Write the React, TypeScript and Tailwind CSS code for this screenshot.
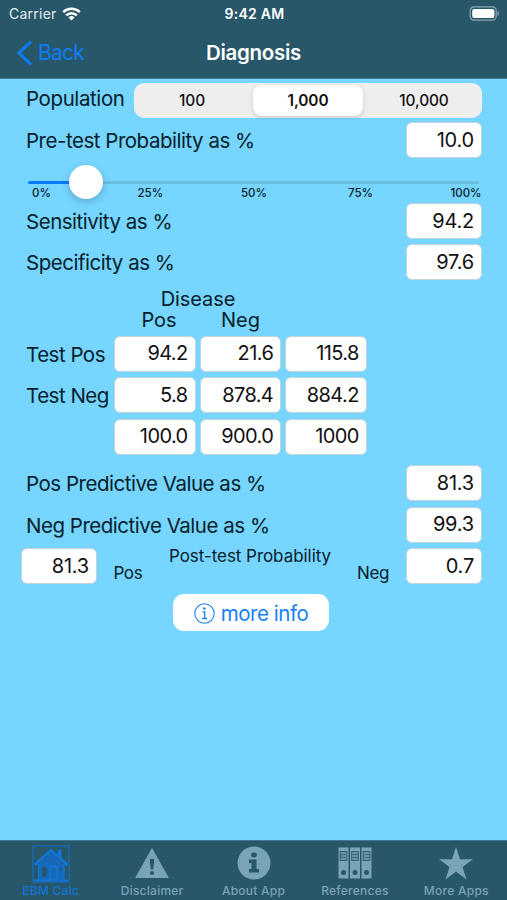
import { useState } from "react";

const populations = [
  { label: "100", className: "flex-1 pr-[5px] font-medium" },
  { label: "1,000", className: "w-[110px] font-medium" },
  { label: "10,000", className: "flex-1 pl-[5px] font-medium" },
];

const tableRows = [
  { label: "Test Pos", values: ["94.2", "21.6", "115.8"] },
  { label: "Test Neg", values: ["5.8", "878.4", "884.2"] },
  { label: "", values: ["100.0", "900.0", "1000"] },
];

function StatusBar() {
  return (
    <div className="grid h-7 grid-cols-3 items-center pr-[7px] pl-[9px] text-white">
      <div className="flex items-center gap-[5px]">
        <span className="text-[14px] leading-none tracking-[0.25px] text-[#e4edf1]">Carrier</span>
        <svg width="19" height="14" viewBox="0 0 19 14" fill="none" stroke="currentColor" strokeWidth="2.5">
          <path d="M1.2 5.1a12 12 0 0 1 16.6 0" />
          <path d="M4.2 8.4a7.6 7.6 0 0 1 10.6 0" />
          <path d="M9.5 13.6l-3-3.1a4.3 4.3 0 0 1 6 0z" fill="currentColor" stroke="none" />
        </svg>
      </div>
      <span className="text-center text-[14px] leading-none font-semibold tracking-[0.25px] whitespace-nowrap">9:42 AM</span>
      <svg className="mt-[-1px] justify-self-end" width="31" height="15" viewBox="0 0 31 15">
        <rect x="1.2" y="0.9" width="26" height="13.2" rx="3.8" fill="none" stroke="#8da6b0" strokeWidth="1.2" />
        <rect x="3.2" y="3" width="22.200" height="9" rx="2" fill="#fff" />
        <path d="M28.500 5v5c1.800-.6 1.800-4.400 0-5z" fill="#8da6b0" />
      </svg>
    </div>
  );
}

function NavBar() {
  return (
    <div className="grid h-[49px] grid-cols-3 items-center">
      <div className="flex items-center gap-[5px] pl-4 text-[#0f7df5]">
        <svg width="17" height="26" viewBox="0 0 17 26" fill="none" stroke="currentColor" strokeWidth="3">
          <path d="M15 1.500L3 13l12 11.500" />
        </svg>
        <span className="text-[21px] leading-none tracking-[-0.8px]">Back</span>
      </div>
      <h1 className="pt-px text-center text-[20.500px] leading-none font-semibold tracking-[-0.3px] text-white">Diagnosis</h1>
    </div>
  );
}

function Field({ value, className }: { value: string; className: string }) {
  return (
    <div className={`flex h-9 items-center justify-end rounded-[6px] border border-[#c5d3da] bg-white pr-[7px] pb-[1px] text-[20px] leading-none text-[#111] ${className}`}>
      {value}
    </div>
  );
}

function Row({ label, value }: { label: string; value: string }) {
  return (
    <div className="flex h-9 items-center justify-between pr-[25px] pl-[26px]">
      <span className="pt-[3px] text-[20.500px] leading-none tracking-[-0.48px]">{label}</span>
      <Field value={value} className="w-[76px] tracking-[-0.2px]" />
    </div>
  );
}

function HouseIcon() {
  return (
    <svg className="mt-[2px]" width="38" height="38" viewBox="0 0 38 38" fill="none" stroke="#1273d4">
      <rect x="1" y="1" width="36" height="36" strokeWidth="1" />
      <path d="M6 20L19 8l13 12v15H6z" fill="#1668b8" stroke="none" />
      <path d="M27.500 13V4.500" strokeWidth="4" />
      <path d="M2.500 20L19 5.500l16.500 14.500" strokeWidth="3" />
      <path d="M6.500 19v16M32 19v16" strokeWidth="1.500" />
      <path d="M2 35.500h34" strokeWidth="2" />
      <rect x="10" y="22" width="4.500" height="9.500" fill="#285468" stroke="none" />
      <path d="M18.500 35V21.500H25V35" strokeWidth="1.800" />
      <path d="M28.500 22v5M26.500 24.500h4" stroke="#285a85" strokeWidth="1.200" />
    </svg>
  );
}

function WarningIcon() {
  return (
    <svg width="36" height="32" viewBox="0 0 36 32">
      <path d="M18 1L35 31H1z" fill="#79a3b7" />
      <path d="M15.700 12h4.600l-1 10.500h-2.600z" fill="#29576a" />
      <circle cx="18" cy="26" r="2.100" fill="#29576a" />
    </svg>
  );
}

function InfoIcon() {
  return (
    <svg width="34" height="34" viewBox="0 0 34 34">
      <circle cx="17" cy="17" r="16.500" fill="#79a3b7" />
      <ellipse cx="17" cy="9" rx="2.900" ry="2.400" fill="#29576a" />
      <path d="M12 13.500h7.500v9.500h2.500v3.500H12V23h2.500v-6H12z" fill="#29576a" />
    </svg>
  );
}

function BindersIcon() {
  return (
    <svg width="34" height="32" viewBox="0 0 34 32">
      {[0.5, 12, 23.5].map((x) => (
        <g key={x} transform={`translate(${x} 0)`}>
          <rect y="0.5" width="10" height="31" fill="#79a3b7" />
          <rect x="1.700" y="4.500" width="6.600" height="9" fill="#6893a7" stroke="#365f72" />
          <path d="M2 7.500h6M2 10.500h6" stroke="#365f72" strokeWidth="0.700" />
          <circle cx="5" cy="25.500" r="2.500" fill="#29576a" />
        </g>
      ))}
    </svg>
  );
}

function StarIcon() {
  return (
    <svg width="34" height="33" viewBox="0 0 34 33">
      <path d="M17 0l4 12.300h13l-10.500 7.700 4 12.500L17 24.800 6.500 32.500l4-12.500L0 12.300h13z" fill="#79a3b7" />
    </svg>
  );
}

const tabs = [
  { label: "EBM Calc", icon: <HouseIcon /> },
  { label: "Disclaimer", icon: <WarningIcon /> },
  { label: "About App", icon: <InfoIcon /> },
  { label: "References", icon: <BindersIcon /> },
  { label: "More Apps", icon: <StarIcon /> },
];

function App() {
  const [population, setPopulation] = useState("1,000");

  return (
    <div className="flex h-[900px] w-[507px] flex-col overflow-hidden bg-[#76d6ff] font-['Inter',sans-serif] text-[#06202b]">
      <header className="h-[79px] shrink-0 border-b border-[#3f7890] bg-[#29576a]">
        <StatusBar />
        <NavBar />
      </header>

      <main className="flex-1">
        <div className="flex items-start pt-1 pl-[26px]">
          <span className="w-[108px] pt-[6px] text-[20.500px] leading-none tracking-[-0.4px]">Population</span>
          <div className="flex h-[35px] w-[348px] items-center rounded-[10px] bg-[#eee] p-[2px]">
            {populations.map((p) => (
              <button
                key={p.label}
                onClick={() => setPopulation(p.label)}
                className={`h-[31px] text-[15.400px] leading-none tracking-[-0.1px] text-[#111] ${p.className} ${
                  p.label === population ? "rounded-[9px] bg-white font-semibold shadow-[0_2px_5px_rgba(0,0,0,0.14)]" : ""
                }`}
              >
                {p.label}
              </button>
            ))}
          </div>
        </div>

        <div className="mt-1">
          <Row label="Pre-test Probability as %" value="10.0" />
        </div>

        <div className="mt-[7px] flex h-[34px] items-center px-7">
          <div className="h-[3px] w-[42px] rounded-l-full bg-[#087bfa]" />
          <div className="z-10 -mx-px size-[34px] rounded-full bg-white shadow-[0_3px_8px_rgba(0,0,0,0.2)]" />
          <div className="h-[3px] flex-1 rounded-r-full bg-[#6dbde0]" />
        </div>
        <div className="-mt-[12px] flex h-3 items-center pl-8 text-[11.500px] leading-[14px] font-medium">
          <span className="w-[105.500px]">0%</span>
          <span className="w-[103.500px]">25%</span>
          <span className="w-[107px]">50%</span>
          <span className="w-[102.500px]">75%</span>
          <span>100%</span>
        </div>

        <div className="mt-[4px] flex flex-col gap-[5px]">
          <Row label="Sensitivity as %" value="94.2" />
          <Row label="Specificity as %" value="97.6" />
        </div>

        <div className="pt-[8.500px] pl-[114px] text-[20px] leading-[21px]">
          <div className="w-[168px] text-center tracking-[-0.1px]">Disease</div>
          <div className="flex gap-1 text-center">
            <span className="w-[90px]">Pos</span>
            <span className="w-[65px]">Neg</span>
          </div>
        </div>

        <div className="mt-[5px] flex flex-col gap-[5.500px]">
          {tableRows.map((row, i) => (
            <div key={i} className="flex items-center pl-[26px]">
              <span className="w-[88px] pt-[3px] text-[20.500px] leading-none tracking-[-0.5px] whitespace-nowrap">{row.label}</span>
              <div className="flex gap-[4px]">
                {row.values.map((v) => (
                  <Field key={v} value={v} className="w-[81.600px] tracking-[-0.6px]" />
                ))}
              </div>
            </div>
          ))}
        </div>

        <div className="mt-[10.500px] flex flex-col gap-[5.500px]">
          <Row label="Pos Predictive Value as %" value="81.3" />
          <Row label="Neg Predictive Value as %" value="99.3" />
        </div>

        <div className="mt-[5.500px] flex h-9 items-start pl-[21px] text-[17px] leading-none tracking-[-0.05px]">
          <Field value="81.3" className="w-[76px] tracking-[-0.2px]" />
          <span className="w-[72px] pt-[17px] pl-[16.500px] tracking-[-0.4px]">Pos</span>
          <span className="w-[188px]">Post-test Probability</span>
          <span className="w-[49px] pt-[17px] tracking-[-0.4px]">Neg</span>
          <Field value="0.7" className="w-[76px] tracking-[-0.2px]" />
        </div>

        <button className="mt-[10px] ml-[173px] flex h-[37px] w-[156px] items-center justify-center gap-[6px] rounded-[11px] bg-white text-[20.500px] leading-none tracking-[-0.45px] text-[#1780f5]">
          <svg className="mt-[2px]" width="21" height="21" viewBox="0 0 21 21" fill="none" stroke="currentColor">
            <circle cx="10.500" cy="10.500" r="9.700" strokeWidth="1.100" />
            <circle cx="10.300" cy="5.500" r="1.200" fill="currentColor" stroke="none" />
            <path d="M8.500 8.800h2.200v6.700M8.200 15.500h5" strokeWidth="1.300" />
          </svg>
          <span className="pt-[3px]">more info</span>
        </button>
      </main>

      <nav className="flex h-[60px] shrink-0 border-t border-[#3f7890] bg-[#29576a]">
        {tabs.map((tab, i) => (
          <div key={tab.label} className={`flex flex-1 flex-col items-center ${i === 0 ? "text-[#1173d8]" : "text-[#79a3b7]"}`}>
            <div className="flex h-[44px] items-center">{tab.icon}</div>
            <span className="text-[12px] leading-[12px] font-medium tracking-[0.25px] whitespace-nowrap">{tab.label}</span>
          </div>
        ))}
      </nav>
    </div>
  );
}

export default App;
